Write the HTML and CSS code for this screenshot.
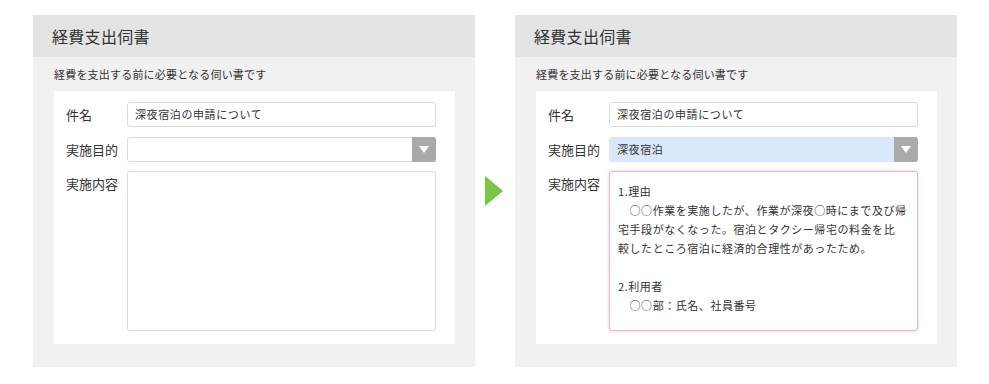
FILE: index.html
```html
<!DOCTYPE html>
<html lang="ja">
<head>
    <meta charset="UTF-8">
    <title>経費支出伺書</title>
    <link rel="stylesheet" href="styles.css">
</head>
<body>
<div class="wrap">
    <!-- 入力前 -->
    <div class="panel">
        <h2 class="panel-title">経費支出伺書</h2>
        <p class="panel-desc">経費を支出する前に必要となる伺い書です</p>
        <div class="card">
            <div class="row">
                <span class="label">件名</span>
                <div class="field">深夜宿泊の申請について</div>
            </div>
            <div class="row">
                <span class="label">実施目的</span>
                <div class="field select"><span class="caret"></span></div>
            </div>
            <div class="row">
                <span class="label">実施内容</span>
                <div class="field area"></div>
            </div>
        </div>
    </div>

    <div class="arrow"><span class="tri"></span></div>

    <!-- 入力後 -->
    <div class="panel">
        <h2 class="panel-title">経費支出伺書</h2>
        <p class="panel-desc">経費を支出する前に必要となる伺い書です</p>
        <div class="card">
            <div class="row">
                <span class="label">件名</span>
                <div class="field">深夜宿泊の申請について</div>
            </div>
            <div class="row">
                <span class="label">実施目的</span>
                <div class="field select selected">深夜宿泊<span class="caret"></span></div>
            </div>
            <div class="row">
                <span class="label">実施内容</span>
                <div class="field area focus">1.理由<br>　○○作業を実施したが、作業が深夜○時にまで及び帰<br>宅手段がなくなった。宿泊とタクシー帰宅の料金を比<br>較したところ宿泊に経済的合理性があったため。<br><br>2.利用者<br>　○○部：氏名、社員番号</div>
            </div>
        </div>
    </div>
</div>
</body>
</html>
```

FILE: styles.css
```css
/*初始化 reset*/
body,h2,p{margin:0;padding:0}
body{
    font-family:"Noto Sans CJK JP", "Noto Sans", sans-serif;
    color:#333;
    background:#fff;
}

.wrap{
    display:flex;
    padding:15px 0 0 33px;
}
.panel{
    width:442px;
    height:352px;
    background:#f1f1f1;
}
.panel-title{
    height:42px;
    line-height:42px;
    padding-left:19px;
    background:#e4e4e4;
    font-size:16px;
    font-weight:normal;
    letter-spacing:0.3px;
    color:#333;
}
.panel-desc{
    height:34px;
    line-height:34px;
    padding-left:21px;
    font-size:11px;
    letter-spacing:0.2px;
    color:#333;
}
.card{
    margin:0 20px 0 21px;
    background:#fff;
    padding:11px 19px 13px 12px;
    display:flex;
    flex-direction:column;
    gap:10px;
}
.row{
    display:flex;
}
.row:last-child{
    margin-top:-1px;
}
.label{
    width:61px;
    flex:none;
    line-height:25px;
    font-size:13px;
    color:#333;
}
.field{
    flex:1;
    position:relative;
    box-sizing:border-box;
    height:25px;
    line-height:23px;
    padding:0 7px;
    border:1px solid #dcdcdc;
    border-radius:3px;
    background:#fff;
    font-size:11px;
    letter-spacing:0.6px;
    color:#333;
    white-space:nowrap;
}
.select{
    padding-right:30px;
}
.selected{
    background:#d9e8fa;
    border-color:#d9e8fa;
}
.caret{
    position:absolute;
    top:-1px;
    right:-1px;
    width:24px;
    height:25px;
    background:#aaa;
    border-radius:0 3px 3px 0;
}
.caret:after{
    content:"";
    position:absolute;
    left:7px;
    top:9px;
    border-left:5px solid transparent;
    border-right:5px solid transparent;
    border-top:7px solid #fff;
}
.area{
    height:160px;
    line-height:19px;
    padding:10px 8px;
    letter-spacing:0.55px;
}
.focus{
    border-color:#f0b3cb;
    box-shadow:0 0 3px #f6c3d7;
}

.arrow{
    width:40px;
    display:flex;
    align-items:center;
    justify-content:center;
    height:352px;
}
.tri{
    width:0;
    height:0;
    margin-left:-3px;
    border-top:15px solid transparent;
    border-bottom:15px solid transparent;
    border-left:18px solid #79c743;
}
```
